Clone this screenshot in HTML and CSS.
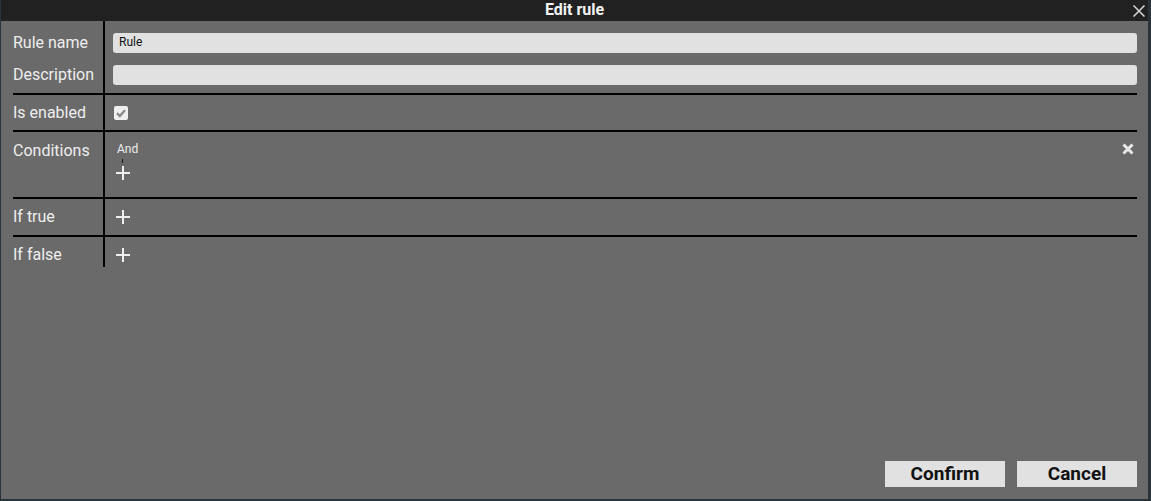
FILE: index.html
```html
<!DOCTYPE html>
<html>
<head>
<meta charset="utf-8">
<link rel="stylesheet" href="styles.css">
</head>
<body>
<div class="window">
  <div class="titlebar">
    <span></span>
    <span class="title">Edit rule</span>
    <button class="close" aria-label="Close">
      <svg width="12" height="12" viewBox="0 0 12 12"><path d="M0.5 0.5 L11.5 11.5 M11.5 0.5 L0.5 11.5" stroke="#d8d8d8" stroke-width="1.5" fill="none"/></svg>
    </button>
  </div>
  <div class="form">
    <div class="sec">
      <div class="lbl lbl-top">Rule name</div>
      <div class="val val-top"><div class="input">Rule</div></div>
      <div class="lbl lbl-top lbl-last">Description</div>
      <div class="val val-top val-last"><div class="input"></div></div>
    </div>
    <div class="sec">
      <div class="lbl pb7">Is enabled</div>
      <div class="val pb7">
        <span class="checkbox">
          <svg width="14" height="14" viewBox="0 0 14 14"><path d="M3 7.2 L5.8 10 L11 4.2" stroke="#8a8a8a" stroke-width="2.4" fill="none"/></svg>
        </span>
      </div>
    </div>
    <div class="sec">
      <div class="lbl cond-lbl">Conditions</div>
      <div class="val cond">
        <div class="cond-head">
          <span class="and">And</span>
          <button class="remove" aria-label="Remove">
            <svg width="12" height="12" viewBox="0 0 12 12"><path d="M1.5 1.5 L10.5 10.5 M10.5 1.5 L1.5 10.5" stroke="#e8e8e8" stroke-width="3" fill="none"/></svg>
          </button>
        </div>
        <div class="dash"></div>
        <button class="add" aria-label="Add"><svg width="20" height="20" viewBox="0 0 20 20"><path d="M3 10 H17 M10 3 V17" stroke="#eeeeee" stroke-width="2" fill="none"/></svg></button>
      </div>
    </div>
    <div class="sec">
      <div class="lbl">If true</div>
      <div class="val"><button class="add" aria-label="Add"><svg width="20" height="20" viewBox="0 0 20 20"><path d="M3 10 H17 M10 3 V17" stroke="#eeeeee" stroke-width="2" fill="none"/></svg></button></div>
    </div>
    <div class="sec">
      <div class="lbl pb2">If false</div>
      <div class="val pb2"><button class="add" aria-label="Add"><svg width="20" height="20" viewBox="0 0 20 20"><path d="M3 10 H17 M10 3 V17" stroke="#eeeeee" stroke-width="2" fill="none"/></svg></button></div>
    </div>
  </div>
  <div class="footer">
    <button class="btn">Confirm</button>
    <button class="btn">Cancel</button>
  </div>
</div>
</body>
</html>
```
FILE: styles.css
```css
html, body {
  margin: 0;
  padding: 0;
  background: #29333a;
}
body {
  font-family: Roboto, "Liberation Sans", sans-serif;
  height: 501px;
  overflow: hidden;
}
.window {
  width: 1148px;
  height: 499px;
  box-sizing: border-box;
  border-left: 1px solid #29333a;
  background: #6a6a6a;
  display: flex;
  flex-direction: column;
}
.titlebar {
  height: 21px;
  background: #212121;
  display: grid;
  grid-template-columns: 1fr auto 1fr;
  align-items: center;
}
.title {
  color: #f2f2f2;
  font-weight: bold;
  font-size: 16px;
  line-height: 19px;
  padding-bottom: 2px;
}
.close {
  justify-self: end;
  margin-right: 3px;
  margin-top: 1px;
  padding: 0;
  border: 0;
  background: none;
  width: 12px;
  height: 12px;
  display: flex;
}
.form {
  margin: 0 11px 0 12px;
}
.sec {
  display: grid;
  grid-template-columns: 92px 1fr;
  border-top: 2px solid #000;
}
.sec:first-child {
  border-top: none;
}
.lbl {
  border-right: 2px solid #000;
  color: #eeeeee;
  font-size: 16px;
  line-height: 20px;
  padding: 8px 0 8px 0;
  white-space: nowrap;
}
.cond-lbl {
  padding-top: 9px;
  padding-bottom: 7px;
}
.val {
  padding: 8px 0 8px 8px;
  display: flex;
  align-items: flex-start;
}
.lbl-top, .val-top {
  padding-top: 12px;
  padding-bottom: 0;
}
.lbl-last, .val-last {
  padding-bottom: 8px;
}
.pb7 { padding-bottom: 7px; }
.pb2 { padding-bottom: 2px; }
.input {
  flex: 1;
  height: 20px;
  line-height: 19px;
  background: #e1e1e1;
  border-radius: 3px;
  font-size: 12px;
  color: #111;
  padding-left: 6px;
}
.checkbox {
  width: 14px;
  height: 14px;
  margin: 3px 0 0 1px;
  background: #efefef;
  border-radius: 2px;
  display: flex;
}
.cond {
  flex-direction: column;
  align-items: stretch;
  padding-top: 9px;
  padding-bottom: 14px;
}
.cond-head {
  display: flex;
  justify-content: space-between;
  align-items: center;
}
.and {
  font-size: 12px;
  line-height: 16px;
  color: #eeeeee;
  padding-left: 4px;
}
.remove {
  padding: 0;
  border: 0;
  background: none;
  width: 12px;
  height: 12px;
  margin-right: 3px;
  display: flex;
}
.dash {
  width: 1px;
  height: 4px;
  background: #1a1a1a;
  margin: 2px 0 0 9px;
}
.add {
  width: 20px;
  height: 20px;
  padding: 0;
  border: 0;
  background: none;
  display: flex;
}
.footer {
  margin-top: auto;
  display: flex;
  justify-content: flex-end;
  gap: 12px;
  padding: 0 11px 12px 0;
}
.btn {
  width: 120px;
  height: 26px;
  border: 0;
  border-radius: 0;
  background: #e1e1e1;
  color: #111;
  font-family: Roboto, "Liberation Sans", sans-serif;
  font-weight: bold;
  font-size: 19px;
  padding: 0;
  line-height: 26px;
}
```
